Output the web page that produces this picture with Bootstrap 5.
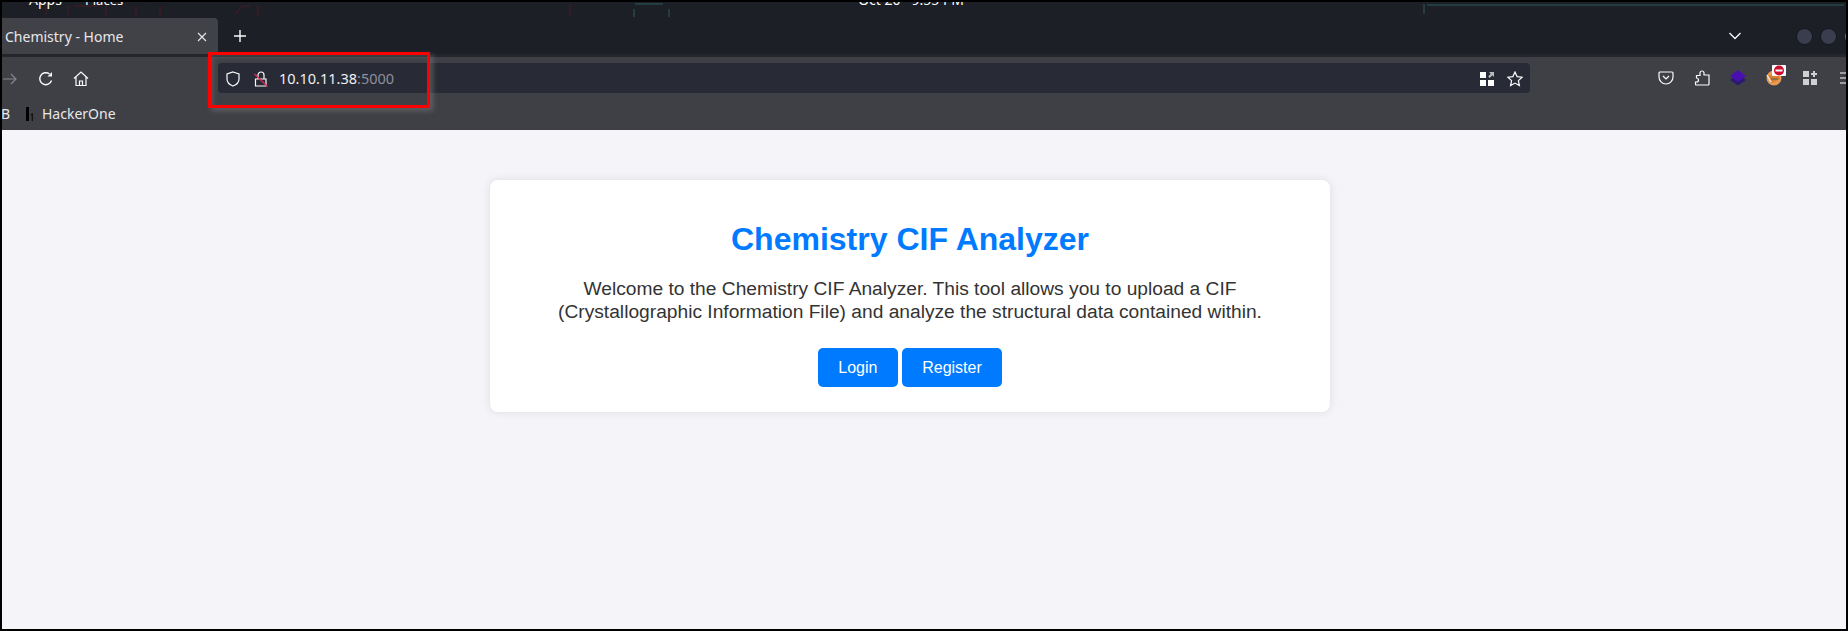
<!DOCTYPE html>
<html lang="en">
<head>
  <meta charset="UTF-8" />
  <meta name="viewport" content="width=device-width, initial-scale=1.0"/>
  <title>Chemistry - Home</title>
  <link href="https://cdn.jsdelivr.net/npm/bootstrap@5.3.0/dist/css/bootstrap.min.css" rel="stylesheet"/>
  <style>
    html, body { height: 100%; margin: 0; overflow: hidden; background: #000; }
    .shot { position: relative; width: 1848px; height: 631px; border: 2px solid #000; overflow: hidden; font-family: "Noto Sans", sans-serif; }
    .tabstrip { position: relative; height: 55px; background: #1c1f26; border-bottom: 3px solid #24262b; }
    .os-bar { height: 16px; overflow: hidden; color: #fff; font-size: 14px; line-height: 16px; }
    .os-bar span { display: block; margin-top: -10px; white-space: nowrap; }
    .os-apps { margin-left: 27px; }
    .os-places { margin-left: 23px; font-size: 13px; }
    .os-clock { margin-left: 735px; }
    .wallpaper { position: absolute; left: 0; top: 0; }
    .tab-row { position: relative; height: 36px; }
    .tab-row svg { flex: none; }
    .fx-tab { width: 216px; height: 36px; flex: none; background: #414248; border-radius: 0 4px 4px 0; color: #e8e8ea; font-size: 14px; padding: 1px 11px 0 3px; }
    .new-tab { margin-left: 16px; }
    .tab-chevron { margin-left: 1483px; }
    .win-dot { width: 17px; height: 17px; border-radius: 50%; background: #3a3d4d; border: 1px solid #14161b; flex: none; }
    .win-dot-first { margin-left: 54.5px; }
    .win-dot-gap { margin-left: 7px; }
    .win-dot-blue { background: #2a7cf0; }
    .chrome-bars { background: #3f4046; }
    .nav-row { height: 42px; padding-top: 6px; }
    .nav-row svg { flex: none; }
    .nav-group { height: 30px; flex: none; }
    .nav-left { padding-top: 2px; }
    .back-ic { margin-left: 1px; }
    .reload-ic { margin-left: 21px; }
    .home-ic { margin-left: 19px; }
    .url-bar { width: 1312px; height: 30px; margin-left: 129px; background: #282a35; border-radius: 4px; padding: 1px 7px 0 8px; color: #f0f0f4; font-size: 14.5px; flex: none; }
    .url-lock { margin-left: 14px; }
    .url-text { margin-left: 11px; }
    .url-port { color: #8f8f9d; }
    .url-star { margin-left: 13px; }
    .pocket-ic { margin-left: 128px; }
    .tool-ic { margin-left: 20px; }
    .fox-ic { margin-left: 20px; margin-right: -4px; margin-bottom: 5px; }
    .grid-ic { margin-left: 21px; }
    .burger-ic { margin-left: 23px; }
    .bookmark-row { height: 31px; padding-bottom: 2px; color: #e8e8ea; font-size: 14px; }
    .bm-b { width: 24px; margin-left: -1px; margin-right: 1px; }
    .bm-logo { margin-right: 8px; }
    .red-box { position: absolute; left: 206px; top: 50px; width: 222px; height: 56px; border: 3px solid #f00; box-shadow: 3px 3px 5px rgba(120,120,120,.55), inset 3px 3px 5px rgba(120,120,120,.35); pointer-events: none; }
    .page-area { height: 499px; background: #f4f4f9; padding-top: 50px; font-family: "Liberation Sans", Arial, sans-serif; color: #333; }
    .cif-card { width: 840px; height: 232px; margin-left: 488px; padding: 20px; background: #fff; border: 0; border-radius: 8px; box-shadow: 0 0 10px rgba(0,0,0,.1); }
    .cif-title { color: #007bff; font-size: 32px; font-weight: 700; line-height: 37px; margin: 21px 0 0; }
    .cif-text { font-size: 19.2px; line-height: 23px; margin: 19px 0 0; }
    .cif-actions { margin-top: 25px; gap: 4px; }
    .cif-btn { background: #007bff; border: 0; border-radius: 5px; color: #fff; font-size: 16px; line-height: 19px; padding: 10px 20.4px; }
  </style>
</head>
<body>
  <div class="shot">
    <!-- Browser tabs -->
    <div class="tabstrip">
      <svg class="wallpaper" width="1844" height="18" fill="none" stroke-width="1.5">
        <g stroke="#3b1c25">
          <path d="M44 3v10M66 3v10M72 4h26M104 4v10M134 4v10M158 4v10M234 12l6-8h8M256 4v10M568 2v12"/>
        </g>
        <g stroke="#24474a">
          <path d="M633 2h28M632 7v8M667 7v8M1422 2v10M1425 3h417"/>
        </g>
      </svg>
      <div class="os-bar d-flex">
        <span class="os-apps">Apps</span>
        <span class="os-places">Places</span>
        <span class="os-clock">Oct 20&nbsp;&nbsp;&nbsp;9:55 PM</span>
      </div>
      <div class="tab-row d-flex align-items-center">
        <div class="fx-tab d-flex align-items-center justify-content-between">
          <span>Chemistry - Home</span>
          <svg width="10" height="10" viewBox="0 0 10 10" stroke="#e8e8ea" stroke-width="1.1"><path d="M1 1l8 8M9 1l-8 8"/></svg>
        </div>
        <svg class="new-tab" width="12" height="12" viewBox="0 0 12 12" stroke="#fbfbfe" stroke-width="1.4"><path d="M6 0v12M0 6h12"/></svg>
        <svg class="tab-chevron" width="12" height="8" viewBox="0 0 12 8" fill="none" stroke="#fbfbfe" stroke-width="1.3"><path d="M.5 1l5.5 5.5L11.500 1"/></svg>
        <div class="win-dot win-dot-first"></div>
        <div class="win-dot win-dot-gap"></div>
        <div class="win-dot win-dot-gap win-dot-blue"></div>
      </div>
    </div>

    <!-- Toolbar and bookmarks -->
    <div class="chrome-bars">
      <div class="nav-row d-flex align-items-start">
        <div class="nav-group nav-left d-flex align-items-center">
          <svg class="back-ic" width="14" height="12" viewBox="0 0 14 12" fill="none" stroke="#85858b" stroke-width="1.2"><path d="M0 6h13M8 1l5 5-5 5"/></svg>
          <svg class="reload-ic" width="16" height="16" viewBox="0 0 16 16" fill="none" stroke="#fbfbfe" stroke-width="1.4"><path d="M13.500 9.500A6 6 0 1 1 11.500 3"/><path d="M14 1v4.500H9.500" fill="#fbfbfe" stroke="none"/></svg>
          <svg class="home-ic" width="16" height="16" viewBox="0 0 16 16" fill="none" stroke="#fbfbfe" stroke-width="1.2"><path d="M1 7.500L8 1l7 6.500M3 6v8.500h10V6M6.500 14.500V10h3v4.500"/></svg>
        </div>
        <div class="url-bar d-flex align-items-center">
          <svg width="14" height="16" viewBox="0 0 14 16" fill="none" stroke="#fbfbfe" stroke-width="1.2"><path d="M7 1l6 2v5c0 3.500-2.500 5.800-6 7-3.500-1.200-6-3.500-6-7V3z"/></svg>
          <svg class="url-lock" width="14" height="16" viewBox="0 0 14 16" fill="none" stroke="#fbfbfe" stroke-width="1.2"><path d="M1.500 8h10.500v7H1.500zM4 8V4a3 3 0 0 1 6 0v4"/><path d="M.5 3l13 12.500" stroke="#e22850"/></svg>
          <span class="url-text">10.10.11.38<span class="url-port">:5000</span></span>
          <svg class="ms-auto" width="14" height="14" viewBox="0 0 14 14" fill="#fff"><rect width="6" height="6"/><rect x="8" y="8" width="6" height="6"/><rect y="8" width="6" height="6"/><path d="M9 0h5v5l-1.700-1.700L9.800 6 8.200 4.500l2.500-2.800z" fill="#bdbdc0"/></svg>
          <svg class="url-star" width="16" height="16" viewBox="0 0 16 16" fill="none" stroke="#fbfbfe" stroke-width="1.2"><path d="M8 1l2.100 4.600 5 .6-3.700 3.400 1 5L8 12.100 3.600 14.600l1-5L.9 6.200l5-.6z"/></svg>
        </div>
        <div class="nav-group d-flex align-items-center">
          <svg class="pocket-ic" width="16" height="14" viewBox="0 0 16 14" fill="none" stroke="#fbfbfe" stroke-width="1.200"><path d="M2 1h12a1 1 0 0 1 1 1v4a7 7 0 0 1-14 0V2a1 1 0 0 1 1-1zM5 5l3 3 3-3"/></svg>
          <svg class="tool-ic" width="16" height="16" viewBox="0 0 16 16" fill="none" stroke="#fbfbfe" stroke-width="1.200"><path d="M2 15h12a1 1 0 0 0 1-1V5h-5V3a2 2 0 0 0-4 0v2.500H2.500V8a2 2 0 0 1 0 4H1.500v2a1 1 0 0 0 .5 1z"/></svg>
          <svg class="tool-ic" width="16" height="16" viewBox="0 0 16 16"><path d="M8 4.500l8 5.500-8 5.500L0 10z" fill="#2a1a6e"/><path d="M8 0l8 6-8 6-8-6z" fill="#4a0fb0"/></svg>
          <svg class="fox-ic" width="20" height="21" viewBox="0 0 20 21"><circle cx="8" cy="13" r="7.500" fill="#e79a55"/><path d="M1 11l10-3 3 6-8 4z" fill="#d9822b"/><path d="M1 10l4 7" stroke="#e8e8e8" stroke-width="1.500"/><path d="M5 14h7" stroke="#5b5b5b"/><rect x="6" y="0" width="14" height="11" rx="1" fill="#fff"/><circle cx="13" cy="5.500" r="5" fill="#c8102e"/><rect x="9.500" y="4.500" width="7" height="2" fill="#fff"/></svg>
          <svg class="grid-ic" width="14" height="14" viewBox="0 0 14 14" fill="#d0d0d2"><rect width="6" height="6"/><rect y="8" width="6" height="6"/><rect x="8" y="8" width="6" height="6"/><path d="M10 0h2v2h2v2h-2v2h-2V4H8V2h2z"/></svg>
          <svg class="burger-ic" width="14" height="12" viewBox="0 0 14 12" stroke="#fbfbfe" stroke-width="1.200"><path d="M0 1h14M0 6h14M0 11h14"/></svg>
        </div>
      </div>
      <div class="bookmark-row d-flex align-items-center">
        <span class="bm-b">B</span>
        <svg class="bm-logo" width="8" height="14" viewBox="0 0 8 14"><rect width="3" height="14" fill="#000"/><path d="M4.500 8L6.300 7v7" fill="none" stroke="#111" stroke-width="1.300"/></svg>
        <span>HackerOne</span>
      </div>
    </div>

    <div class="red-box"></div>

    <!-- Page -->
    <div class="page-area">
      <div class="card cif-card text-center">
        <h1 class="cif-title">Chemistry CIF Analyzer</h1>
        <p class="cif-text">Welcome to the Chemistry CIF Analyzer. This tool allows you to upload a CIF (Crystallographic Information File) and analyze the structural data contained within.</p>
        <div class="cif-actions d-flex justify-content-center">
          <a class="btn cif-btn" href="#">Login</a>
          <a class="btn cif-btn" href="#">Register</a>
        </div>
      </div>
    </div>
  </div>
  <script src="https://cdn.jsdelivr.net/npm/bootstrap@5.3.0/dist/js/bootstrap.bundle.min.js"></script>
</body>
</html>
